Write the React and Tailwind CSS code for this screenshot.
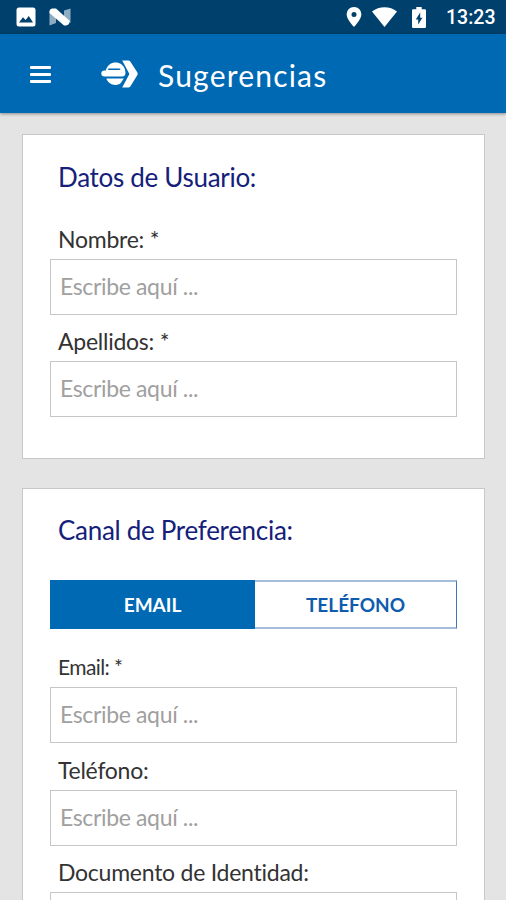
import React, { useState } from "react";

const StatusBar = () => (
  <div className="h-[34px] bg-[#00406c] flex items-center text-white">
    <svg className="ml-4 w-5 h-5" viewBox="0 0 20 20">
      <rect x="0.5" y="0.5" width="19" height="19" rx="2.5" fill="#fff" />
      <path d="M3 15.5 L7 10.2 L9.6 13 L12.8 9 L17 15.5 Z" fill="#00406c" />
    </svg>
    <svg className="ml-[13px] w-[22px] h-[18px]" viewBox="0 0 22 18">
      <path d="M0.5 2.5 L7 8 V15 L0.5 17.5 Z" fill="#8fadc2" />
      <path d="M15 2.5 L21.5 0.5 V15 L15 10 Z" fill="#8fadc2" />
      <path d="M0.5 3.5 Q0.5 1.2 3 0.5 H7 L20.8 13 Q20.5 17.2 17 17.5 H15 L0.5 5 Z" fill="#fff" />
    </svg>
    <div className="flex-1" />
    <svg className="w-4 h-5" viewBox="0 0 16 20">
      <path
        fillRule="evenodd"
        d="M8 0 A7.3 7.3 0 0 0 0.6 7.3 C0.6 12.6 8 20 8 20 S15.4 12.6 15.4 7.3 A7.3 7.3 0 0 0 8 0 Z M8 4.9 a2.5 2.5 0 1 1 0 5 a2.5 2.5 0 0 1 0 -5 Z"
        fill="#fff"
      />
    </svg>
    <svg className="ml-2.5 w-[25px] h-5" viewBox="0 0 25 20">
      <path d="M0 4.5 C7 -1.2 18 -1.2 25 4.5 L12.5 20 Z" fill="#fff" />
    </svg>
    <svg className="ml-[15px] w-[14px] h-[21px]" viewBox="0 0 14 21">
      <path
        fillRule="evenodd"
        d="M4.3 0 H9.7 V2.2 H12.8 Q14 2.2 14 3.4 V19.8 Q14 21 12.8 21 H1.2 Q0 21 0 19.8 V3.4 Q0 2.2 1.2 2.2 H4.3 Z M8.2 5.5 L3.8 12.4 H6.2 V17.6 L10.4 10.8 H8.2 Z"
        fill="#fff"
      />
    </svg>
    <span className="ml-[20px] mr-[11px] mt-[2px] w-[49px] whitespace-nowrap font-['Roboto',sans-serif] font-medium text-[19.5px] leading-6">
      13:23
    </span>
  </div>
);

const Header = () => (
  <header className="relative h-[79px] bg-[#0069b4] flex items-center text-white shadow-[0_1px_3px_rgba(0,0,0,0.4)]">
    <button className="ml-[30px] mt-px flex flex-col gap-[4px]" aria-label="Menu">
      <span className="w-[21px] h-[3px] rounded-[1px] bg-white" />
      <span className="w-[21px] h-[3px] rounded-[1px] bg-white" />
      <span className="w-[21px] h-[3px] rounded-[1px] bg-white" />
    </button>
    <svg className="ml-[50px] w-[37px] h-7" viewBox="0 0 37 28">
      {/* globe shaped as an "e" */}
      <path
        fillRule="evenodd"
        d="M4.8 10.4 C6.3 5 10.3 2.4 14.5 2.4 C19 2.4 22.6 5 24 9.5 Q25.6 16.4 21.5 16.4 H3.4 Q0.3 16.4 0.3 13.4 Q0.3 10.4 3.4 10.4 Z M7.2 8.6 V10.1 H18.3 Q19.4 10.1 19.4 9.3 Q19.4 8.6 18.3 8.6 Z"
        fill="#fff"
      />
      <path d="M5.3 18.6 H22.8 L19.4 23.6 C13.5 27 7.6 24.2 5.3 18.6 Z" fill="#fff" />
      {/* arrow head */}
      <path d="M21.2 0.5 H27.3 Q28.6 0.5 29.3 1.5 L36.4 12.6 Q37 13.8 36.4 14.9 L29.3 26.4 Q28.6 27.5 27.3 27.5 H21.2 L28.4 14 Z" fill="#fff" />
    </svg>
    <h1 className="ml-[20px] mt-[3px] text-[30px] leading-9 tracking-[1.2px]">Sugerencias</h1>
  </header>
);

const Field = ({ label, className = "", labelClass = "text-[23px] tracking-[-0.25px]" }) => (
  <div className={className}>
    <label className={`block pl-2 leading-7 whitespace-nowrap text-[#333] ${labelClass}`}>{label}</label>
    <input
      type="text"
      placeholder="Escribe aquí ..."
      className="block mt-[6px] w-full h-14 pl-[9px] pb-0.5 border border-[#c6c6c6] bg-white text-[23px] tracking-[-0.35px] placeholder:text-[#a0a0a0] focus:outline-none"
    />
  </div>
);

const Card = ({ title, className = "", children }) => (
  <section className={`border border-[#c8c8c8] bg-white px-[27px] ${className}`}>
    <h2 className="pl-2 text-[26px] leading-8 tracking-[-0.3px] text-[#14207a]">{title}</h2>
    {children}
  </section>
);

const App = () => {
  const [channel, setChannel] = useState("email");

  return (
    <div className="h-[900px] overflow-hidden bg-[#e4e4e4] font-['Lato',sans-serif]">
      <StatusBar />
      <Header />
      <main className="pl-[22px] pr-[21px] pt-[21px]">
        <Card title="Datos de Usuario:" className="h-[325px] pt-[26px]">
          <Field label="Nombre: *" className="mt-[32px]" />
          <Field label="Apellidos: *" className="mt-[12px]" />
        </Card>

        <Card title="Canal de Preferencia:" className="mt-[29px] h-[500px] pt-[25px]">
          <div className="mt-[34px] h-[49px] flex text-[19px] pt-0">
            <button
              onClick={() => setChannel("email")}
              className={
                channel === "email"
                  ? "w-[205px] pt-0.5 bg-[#0069b4] text-white font-bold"
                  : "w-[205px] pt-0.5 border border-[#5f8fc5] text-[#0f5cae] font-bold"
              }
            >
              EMAIL
            </button>
            <button
              onClick={() => setChannel("phone")}
              className={
                channel === "phone"
                  ? "flex-1 pt-0.5 bg-[#0069b4] text-white font-bold"
                  : "flex-1 pt-0.5 border-y-2 border-r border-y-[#a5bedb] border-r-[#3f75b8] text-[#0f5cae] font-bold"
              }
            >
              TELÉFONO
            </button>
          </div>
          <Field label="Email: *" className="mt-[24px]" labelClass="text-[21px] tracking-[-0.6px]" />
          <Field label="Teléfono:" className="mt-[13px]" />
          <Field label="Documento de Identidad:" className="mt-[12px]" />
        </Card>
      </main>
    </div>
  );
};

export default App;
